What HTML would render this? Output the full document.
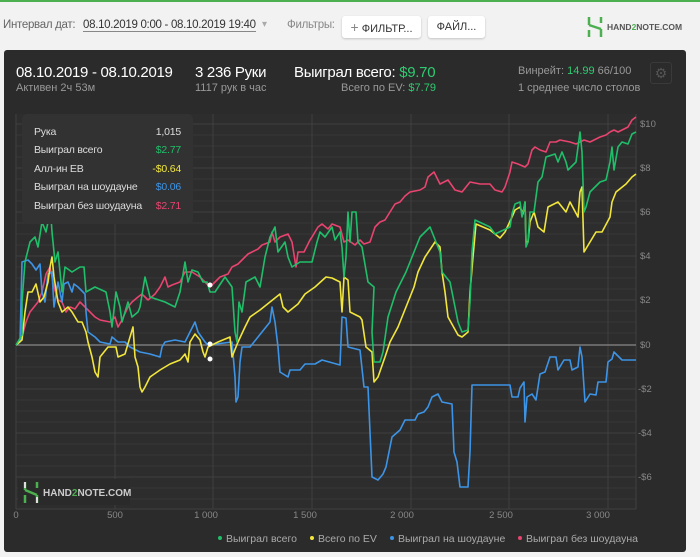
<!DOCTYPE html>
<html><head><meta charset="utf-8"><style>
*{margin:0;padding:0;box-sizing:border-box}
body{width:700px;height:555px;background:#f2f2f2;font-family:"Liberation Sans",sans-serif;position:relative;overflow:hidden;border-top:2px solid #4caf50}
.t{position:absolute;white-space:nowrap}
.btn{position:absolute;background:#fff;border-radius:3px;box-shadow:0 1px 2px rgba(0,0,0,.2);font-size:11px;color:#333;text-align:center;line-height:22px;height:22px}
.panel{position:absolute;left:4px;top:48px;width:682px;height:502px;background:#2b2b2b;border-radius:3px}
.tip{position:absolute;left:22px;top:112px;width:171px;height:110px;background:#323232;border-radius:5px;font-size:10.5px;color:#ddd;letter-spacing:-0.2px}
.tip div{position:absolute;left:12px;right:12px;height:14px}
.tip span{position:absolute;right:0}
</style></head><body>
<div class="t" style="left:3px;top:17px;font-size:11.5px;color:#666;letter-spacing:-0.3px">Интервал дат:</div>
<div class="t" style="left:83px;top:17px;font-size:11.5px;color:#333;border-bottom:1px solid #888;letter-spacing:-0.3px">08.10.2019 0:00 - 08.10.2019 19:40</div>
<div class="t" style="left:262px;top:17px;font-size:10px;color:#aaa">▾</div>
<div class="t" style="left:287px;top:17px;font-size:11.5px;color:#888;letter-spacing:-0.3px">Фильтры:</div>
<div class="btn" style="left:342px;top:14px;width:79px"><span style="color:#888;font-size:14px">+</span> ФИЛЬТР...</div>
<div class="btn" style="left:428px;top:14px;width:57px">ФАЙЛ...</div>
<svg class="t" style="left:587px;top:14px" width="16" height="22"><path d="M2 1v8M2 9l12 4M14 13v8M2 14v7M14 1v6" stroke="#4caf50" stroke-width="2.5" fill="none"/></svg>
<div class="t" style="left:607px;top:20px;font-size:8.5px;font-weight:bold;color:#555">HAND<span style="color:#4caf50">2</span>NOTE.COM</div>
<div class="panel"></div>
<div class="t" style="left:16px;top:62px;font-size:15px;color:#fff;letter-spacing:-0.3px">08.10.2019 - 08.10.2019</div>
<div class="t" style="left:16px;top:80px;font-size:11px;color:#999">Активен 2ч 53м</div>
<div class="t" style="left:195px;top:62px;font-size:15px;color:#fff;letter-spacing:-0.3px">3 236 Руки</div>
<div class="t" style="left:195px;top:80px;font-size:11px;color:#999">1117 рук в час</div>
<div class="t" style="left:294px;top:62px;font-size:15px;color:#fff;letter-spacing:-0.3px">Выиграл всего: <span style="color:#2ecc71">$9.70</span></div>
<div class="t" style="left:341px;top:80px;font-size:11px;color:#999">Всего по EV: <span style="color:#2ecc71">$7.79</span></div>
<div class="t" style="left:518px;top:63px;font-size:11px;color:#999">Винрейт: <span style="color:#2ecc71">14.99</span> 66/100</div>
<div class="t" style="left:518px;top:80px;font-size:11px;color:#999">1 среднее число столов</div>
<div class="t" style="left:650px;top:60px;width:22px;height:22px;border:1px solid #3a3a3a;border-radius:3px;color:#555;font-size:14px;text-align:center;line-height:20px">⚙</div>
<svg class="t" style="left:0;top:0" width="700" height="555">
<rect x="16" y="112" width="620" height="395" fill="#2d2d2d"/>
<g stroke="#363636" stroke-width="1">
<path d="M16 133H636M16 144H636M16 155H636M16 177H636M16 188H636M16 199H636M16 221H636M16 232H636M16 243H636M16 265H636M16 276H636M16 287H636M16 309H636M16 320H636M16 331H636M16 354H636M16 365H636M16 376H636M16 398H636M16 409H636M16 420H636M16 442H636M16 453H636M16 464H636M16 486H636M16 497H636"/>
</g>
<g stroke="#404040" stroke-width="1">
<path d="M16 122H636M16 166H636M16 210H636M16 254H636M16 298H636M16 387H636M16 431H636M16 475H636M16 507H636"/>
<path d="M16 112V507M115 112V507M213 112V507M312 112V507M411 112V507M509 112V507M608 112V507M636 112V507"/>
</g>
<path d="M16 343H636" stroke="#888" stroke-width="1.2"/>
<g fill="none" stroke-width="1.6" stroke-linejoin="round">
<polyline stroke="#e8446f" points="16,343 22,335 26,320 30,310 34,305 38,300 42,290 46,272 50,265 54,285 58,298 62,300 66,310 70,305 75,307 80,300 85,305 90,310 95,315 100,318 110,320 115,315 118,325 122,318 128,305 132,300 138,295 142,292 148,298 155,292 160,285 165,275 168,285 172,283 180,280 185,270 192,270 200,275 205,280 210,285 215,280 220,275 228,272 232,265 238,262 242,258 248,252 252,250 258,247 262,243 270,240 272,230 275,240 280,235 288,232 292,240 296,265 298,250 304,250 310,238 312,235 318,225 322,222 328,227 332,222 340,225 344,240 348,238 355,243 360,238 364,242 370,240 375,225 380,220 385,218 390,210 395,202 400,200 405,194 410,190 420,188 425,185 428,175 434,170 440,182 448,178 455,188 462,190 470,180 480,182 490,182 495,188 502,190 505,185 510,170 512,160 518,162 525,165 528,162 532,148 535,145 540,148 546,150 550,140 556,140 560,138 570,140 576,142 580,140 584,138 590,140 596,137 600,135 606,133 610,130 614,128 618,130 628,125 632,118 636,115"/>
<polyline stroke="#3d94e6" points="16,343 20,340 22,260 28,258 32,262 36,268 40,262 42,290 45,300 48,272 52,270 54,305 58,280 62,300 64,282 68,280 72,290 74,282 78,285 85,292 86,310 88,330 95,335 100,340 110,342 112,335 118,340 125,340 130,345 140,350 150,352 160,355 162,345 165,340 175,338 185,340 190,330 195,320 198,330 205,340 208,343 232,340 235,375 236,400 238,395 240,360 242,345 250,345 258,335 270,320 272,305 275,320 278,345 280,370 288,375 290,368 300,368 305,362 315,362 322,358 340,363 342,315 346,316 348,345 360,348 364,385 368,385 370,430 372,475 378,478 383,472 386,465 388,455 392,435 400,428 405,418 415,418 418,412 424,410 428,405 432,395 438,392 442,400 452,402 454,450 457,460 460,485 468,485 470,450 472,383 510,383 512,395 518,395 520,386 524,380 525,420 527,395 532,392 536,398 540,372 545,370 550,355 556,355 558,368 564,358 570,358 572,368 578,365 580,345 582,355 585,400 590,392 596,393 598,380 606,380 608,360 612,357 614,350 622,358 636,358"/>
<polyline stroke="#f2e63c" points="16,343 22,338 25,310 28,290 32,290 36,282 40,300 44,295 48,280 50,265 52,255 54,275 58,300 62,310 68,305 72,310 78,320 82,320 86,330 88,340 92,355 95,370 98,375 100,355 108,345 116,345 118,355 125,352 130,335 133,325 135,355 138,365 140,385 142,390 145,385 150,375 160,368 170,362 180,358 185,352 188,360 190,340 195,332 200,338 203,350 205,355 208,345 218,340 230,335 232,355 238,340 245,325 250,315 260,308 270,300 280,292 283,305 288,310 298,302 305,292 315,285 326,275 332,276 340,280 342,310 344,275 348,278 350,310 360,315 362,318 366,345 372,350 374,380 378,375 385,355 390,340 398,325 406,305 414,285 418,270 425,255 435,240 440,245 442,270 445,290 448,315 458,333 462,335 468,330 470,290 473,255 476,222 490,228 500,236 505,230 512,215 515,208 520,205 523,212 525,200 526,240 528,240 530,220 534,210 538,225 544,230 548,205 558,200 566,210 570,200 578,215 580,190 582,185 584,250 590,240 596,230 602,230 610,215 612,200 616,190 626,182 632,175 636,172"/>
<polyline stroke="#1fbf6a" points="16,343 22,333 22,300 25,260 30,240 35,235 38,245 42,220 46,230 48,220 50,200 52,230 55,260 58,250 60,270 62,290 65,265 72,270 80,265 84,265 86,290 95,285 106,290 108,300 110,310 112,325 116,290 120,305 122,320 128,300 132,315 138,310 140,305 145,275 150,295 165,300 175,305 180,290 185,260 188,280 192,268 198,270 203,280 207,280 210,290 215,290 225,275 232,285 235,330 237,340 239,300 242,310 246,280 255,275 260,285 265,255 270,235 275,225 278,250 285,240 288,255 292,265 300,260 312,260 317,240 320,230 325,235 332,225 335,238 340,230 342,245 344,275 346,255 348,210 350,240 352,210 356,210 358,240 362,245 368,280 374,285 372,330 374,360 380,360 383,350 388,315 396,290 406,270 414,250 420,235 430,225 436,240 440,250 442,270 450,280 454,300 458,320 462,330 468,328 470,300 472,250 475,218 490,225 495,232 510,225 512,212 515,202 520,200 522,215 525,200 526,245 528,240 530,210 534,210 538,180 542,175 546,155 555,152 558,160 562,150 566,160 568,168 576,160 578,145 580,130 582,150 584,210 586,205 590,190 600,180 606,178 610,160 612,145 614,168 618,145 622,140 628,142 632,132 636,130"/>
</g>
<circle cx="210" cy="283" r="2.5" fill="#fff"/><circle cx="210" cy="342" r="2.5" fill="#fff"/><circle cx="210" cy="357" r="2.5" fill="#fff"/>
<g font-family="Liberation Sans" font-size="9.5" fill="#888">
<text x="640" y="125">$10</text><text x="640" y="169">$8</text><text x="640" y="213">$6</text><text x="640" y="257">$4</text><text x="640" y="301">$2</text><text x="640" y="346">$0</text><text x="638" y="390">-$2</text><text x="638" y="434">-$4</text><text x="638" y="478">-$6</text>
<g text-anchor="middle"><text x="16" y="516">0</text><text x="115" y="516">500</text><text x="206" y="516">1 000</text><text x="305" y="516">1 500</text><text x="402" y="516">2 000</text><text x="501" y="516">2 500</text><text x="598" y="516">3 000</text></g>
</g>
<rect x="18" y="477" width="112" height="26" fill="#2a2a2a"/>
<path d="M25 480v8M25 488l12 5M37 493v8M25 493v8M37 480v6" stroke="#4caf50" stroke-width="2.5" fill="none"/>
<path d="M25 480v6M37 495v6" stroke="#ddd" stroke-width="2" fill="none"/>
<text x="43" y="494" font-family="Liberation Sans" font-size="10" font-weight="bold" fill="#ccc">HAND<tspan fill="#4caf50">2</tspan>NOTE.COM</text>
<g font-family="Liberation Sans" font-size="10.5" fill="#aaa">
<circle cx="220" cy="536" r="2" fill="#1fbf6a"/><text x="226" y="540">Выиграл всего</text>
<circle cx="312" cy="536" r="2" fill="#f2e63c"/><text x="318" y="540">Всего по EV</text>
<circle cx="392" cy="536" r="2" fill="#3d94e6"/><text x="398" y="540">Выиграл на шоудауне</text>
<circle cx="520" cy="536" r="2" fill="#e8446f"/><text x="526" y="540">Выиграл без шоудауна</text>
</g>
</svg>
<div class="tip">
<div style="top:12px">Рука<span>1,015</span></div>
<div style="top:30px">Выиграл всего<span style="color:#1fbf6a">$2.77</span></div>
<div style="top:49px">Алл-ин EB<span style="color:#f2e63c">-$0.64</span></div>
<div style="top:67px">Выиграл на шоудауне<span style="color:#3d94e6">$0.06</span></div>
<div style="top:86px">Выиграл без шоудауна<span style="color:#e8446f">$2.71</span></div>
</div>
</body></html>
